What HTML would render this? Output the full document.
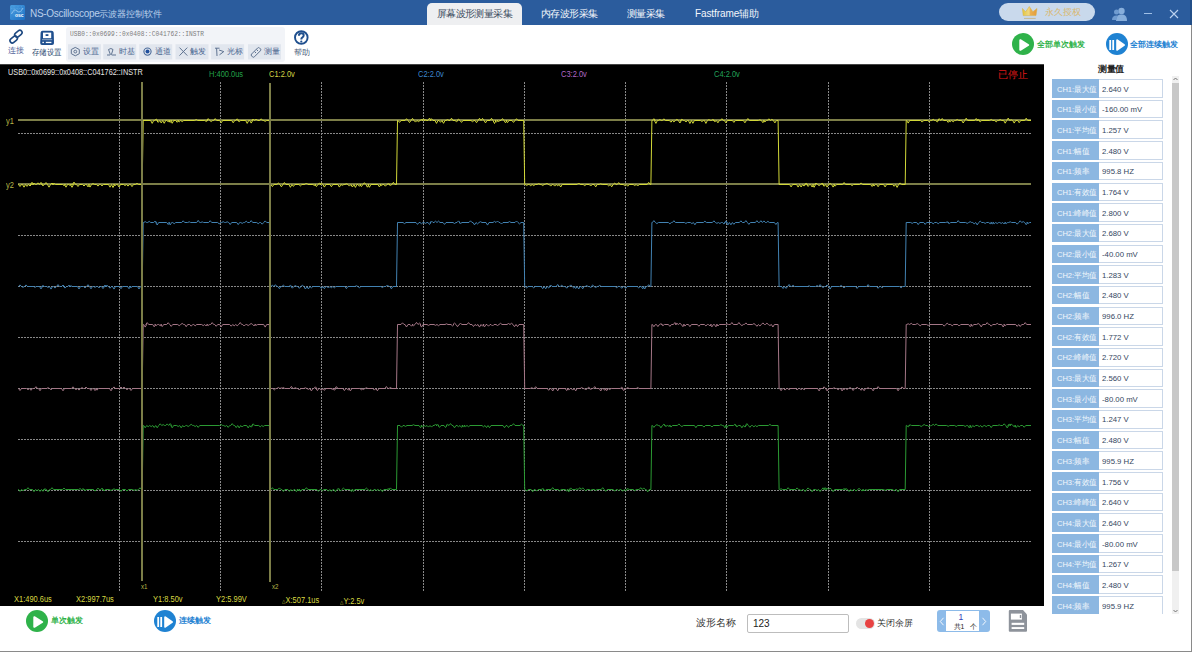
<!DOCTYPE html>
<html><head><meta charset="utf-8">
<style>
*{margin:0;padding:0;box-sizing:border-box}
html,body{width:1192px;height:652px;overflow:hidden;background:#fff;font-family:"Liberation Sans",sans-serif;position:relative}
.a{position:absolute;white-space:nowrap}
#title{left:0;top:0;width:1192px;height:25px;background:#2b5c9d}
.tab{top:8.5px;font-size:10px;letter-spacing:-0.6px;color:#f4f7fb;line-height:10px}
#tab1{left:427px;top:3px;width:95px;height:22px;background:#eeeff1;border-radius:5px 5px 0 0;color:#3c4c5e;font-size:10px;letter-spacing:-0.6px;line-height:10px;padding-top:5.5px;text-align:center}
.tb{top:47.5px;font-size:7.5px;line-height:8px;color:#4a6590}
.mrow{left:1052px;width:111px;height:18.6px}
.ml{position:absolute;left:0;top:0;width:47px;height:100%;background:#8cb7e1;color:#f4f8fc;white-space:nowrap;overflow:hidden}.ml span{position:absolute;left:4.5px;top:6.5px;font-size:8px;line-height:8px;transform-origin:0 0;transform:scaleX(0.94)}
.mv{position:absolute;left:47px;top:0;width:64px;height:100%;background:#fff;border:1px solid #cad7e8;border-left:none;color:#34465e;white-space:nowrap}.mv span{position:absolute;left:3px;top:5.5px;font-size:8px;line-height:8px;transform-origin:0 0;transform:scaleX(0.97)}
.sl{font-size:8.5px;line-height:9px;transform-origin:0 0;transform:scaleX(0.88)}
</style></head><body>
<div class="a" id="title"></div>
<!-- icon -->
<svg class="a" style="left:10px;top:5px" width="15" height="15" viewBox="0 0 15 15"><defs><linearGradient id="ig" x1="0" y1="0" x2="1" y2="1"><stop offset="0" stop-color="#4a9ee0"/><stop offset="1" stop-color="#1c6fc4"/></linearGradient></defs><rect x="0" y="0" width="15" height="15" rx="1.5" fill="url(#ig)"/><path d="M1 3.5H14M1 7H14M4 1V12M8 1V12M11.5 1V12" stroke="#8cc4f0" stroke-width="0.4" stroke-dasharray="0.8 0.8" opacity="0.7"/><path d="M1.5 9 Q4 3 7 6 T13 3" stroke="#bfe0fa" stroke-width="0.6" fill="none"/></svg>
<div class="a" style="left:15px;top:12.5px;font-size:5px;color:#fff;font-weight:bold;line-height:5px">osc</div>
<div class="a" style="left:30px;top:9px;font-size:10px;line-height:10px;color:#b9cfea"><span style="letter-spacing:-0.3px">NS-Oscilloscope</span><span style="font-size:8.8px">示波器控制软件</span></div>
<div class="a" id="tab1">屏幕波形测量采集</div>
<div class="a tab" style="left:541px">内存波形采集</div>
<div class="a tab" style="left:627px">测量采集</div>
<div class="a tab" style="left:695px"><span style="letter-spacing:-0.1px">Fastframe</span>辅助</div>
<!-- license pill -->
<div class="a" style="left:999px;top:3px;width:96px;height:18px;background:#c9d9ec;border-radius:9px"></div>
<div class="a" style="left:1045px;top:8px;font-size:8.8px;line-height:9px;color:#d9b870">永久授权</div>
<svg class="a" style="left:1020px;top:5px" width="20" height="16" viewBox="1020 5 20 16"><defs><linearGradient id="cg" x1="0" y1="0" x2="1" y2="0"><stop offset="0" stop-color="#e2c640"/><stop offset="0.45" stop-color="#efd880"/><stop offset="0.55" stop-color="#eab050"/><stop offset="1" stop-color="#e49a3a"/></linearGradient></defs><path d="M1022.4 8.4 L1025.6 11.8 L1029.3 6.5 L1032.9 11.8 L1037 8.4 L1036 15.6 L1023.2 15.6 Z" fill="url(#cg)" stroke="#d8b040" stroke-width="0.5" stroke-linejoin="round"/><rect x="1024" y="17.9" width="11.7" height="1" fill="#c4b894"/></svg>
<svg class="a" style="left:1112px;top:7px" width="15" height="14" viewBox="0 0 15 14"><circle cx="9.5" cy="4" r="3.2" fill="#87aedb"/><path d="M4 14 C4 9 6 7.5 9.5 7.5 C13 7.5 15 9 15 14Z" fill="#87aedb"/><circle cx="4.5" cy="5" r="2.5" fill="#6f9bd0"/><path d="M0 13 C0 10 1.5 8.5 4.5 8.5 C5 8.5 5.5 8.6 6 8.8 C5 10 4.5 11.5 4.5 13Z" fill="#6f9bd0"/></svg>
<div class="a" style="left:1144px;top:13px;width:8px;height:1px;background:#9fbfe6"></div>
<svg class="a" style="left:1169px;top:9px" width="10" height="10" viewBox="0 0 10 10"><path d="M1 1 L9 9 M9 1 L1 9" stroke="#bcd2f0" stroke-width="1.1"/></svg>
<!-- toolbar -->
<svg class="a" style="left:0;top:25px" width="320" height="39" viewBox="0 25 320 39">
<g fill="none" stroke="#1f4a82" stroke-width="1.6">
<rect x="14.3" y="31.4" width="8.2" height="4.6" rx="2.3" transform="rotate(-40 18.4 33.7)"/>
<rect x="9.6" y="37.2" width="8.2" height="4.6" rx="2.3" transform="rotate(-40 13.7 39.5)"/>
</g>
<path d="M42.5 30.7 H51.5 Q53.5 30.7 53.7 32.7 L54 43 Q54 45 52 45 H42 Q40.2 45 40.2 43 L40.6 32.7 Q40.8 30.7 42.5 30.7Z" fill="#1f4f8e"/>
<rect x="43" y="32.6" width="8.2" height="5.6" fill="#fff"/>
<rect x="45.6" y="34.2" width="2.8" height="1.8" fill="#1f4f8e"/>
<rect x="42" y="39.2" width="10.2" height="1" fill="#fff" opacity="0.5"/>
<rect x="45.8" y="41.8" width="5.6" height="1.3" fill="#fff"/>
<rect x="42.4" y="41.8" width="1.5" height="1.3" fill="#fff"/>
<rect x="66" y="27" width="219" height="35" rx="3" fill="#f2f4f8"/>
<g fill="#e1e6ee">
<rect x="68" y="44.2" width="33" height="15.2"/>
<rect x="103.2" y="44.2" width="33" height="15.2"/>
<rect x="139.2" y="44.2" width="33" height="15.2"/>
<rect x="175.5" y="44.2" width="33" height="15.2"/>
<rect x="211.1" y="44.2" width="33" height="15.2"/>
<rect x="248" y="44.2" width="33" height="15.2"/>
</g>
<g fill="none" stroke="#5f7391" stroke-width="1">
<path d="M75.3 47.4 L79.3 49.5 V53.7 L75.3 55.8 L71.3 53.7 V49.5 Z"/>
<circle cx="75.3" cy="51.6" r="1.4"/>
<path d="M107 55 H110 Q110.5 55 110.2 54 L108.5 49.5 Q111 47.5 113 49.5 L111.5 54.2 Q111.3 55 112 55 H116"/>
<path d="M179.5 47.6 L187.3 55.6 M187.3 47.6 L179.5 55.6"/>
<path d="M215 48.2 H219.5 M216.6 48.2 L217 56 M219 50 L223.8 51.6 L219.5 54.8"/>
<path d="M251.6 54 L257.6 48 Q258.6 47 259.6 48 L260.4 48.8 Q261.4 49.8 260.4 50.8 L254.4 56.8 Q253.4 57.8 252.4 56.8 L251.6 56 Q250.6 55 251.6 54Z M254.5 51.5 L256 53 M256.5 49.5 L258 51"/>
</g>
<circle cx="147.5" cy="51.6" r="3.6" fill="none" stroke="#4a6a9a" stroke-width="1.1"/>
<circle cx="147.5" cy="51.6" r="2" fill="#1f4f9e"/>
<circle cx="301.3" cy="37.5" r="6.3" fill="none" stroke="#1f4f8e" stroke-width="1.9"/>
<path d="M298.9 35.8 Q298.9 33.2 301.3 33.2 Q303.7 33.2 303.7 35.3 Q303.7 36.8 302.2 37.6 Q301.3 38.1 301.3 39.5" fill="none" stroke="#1f4f8e" stroke-width="2"/>
<circle cx="301.3" cy="41.5" r="1.1" fill="#1f4f8e"/>
</svg>
<div class="a" style="left:8px;top:47px;font-size:7.6px;line-height:8px;color:#4f5f98">连接</div>
<div class="a" style="left:32px;top:48.5px;font-size:8px;line-height:8px;color:#2a4a70;transform-origin:0 0;transform:scaleX(0.93)">存储设置</div>
<div class="a" style="left:70px;top:30px;font-family:'Liberation Mono',monospace;font-size:7.8px;line-height:8px;color:#7e7e7e;transform-origin:0 0;transform:scaleX(0.795)">USB0::0x0699::0x0408::C041762::INSTR</div>
<div class="a tb" style="left:83.4px">设置</div>
<div class="a tb" style="left:118.9px">时基</div>
<div class="a tb" style="left:155.3px">通道</div>
<div class="a tb" style="left:189.8px">触发</div>
<div class="a tb" style="left:226.5px">光标</div>
<div class="a tb" style="left:263.6px">测量</div>
<div class="a" style="left:294px;top:48.5px;font-size:7.5px;line-height:8px;color:#4a5a78">帮助</div>
<!-- all trigger -->
<div class="a" style="left:1011.5px;top:33px;width:22px;height:22px;border-radius:50%;background:#2fb24a"></div>
<svg class="a" style="left:1018px;top:38px" width="12" height="14" viewBox="0 0 12 14"><path d="M2.3 2.2 L10.2 7 L2.3 11.8 Z" fill="#fff" stroke="#fff" stroke-width="2" stroke-linejoin="round"/></svg>
<div class="a" style="left:1037px;top:41px;font-size:8px;line-height:8px;color:#2fb24a;font-weight:bold">全部单次触发</div>
<div class="a" style="left:1105.5px;top:33px;width:22px;height:22px;border-radius:50%;background:#1f82d2"></div>
<svg class="a" style="left:1108px;top:38px" width="18" height="14" viewBox="0 0 18 14"><rect x="1.3" y="2" width="1.8" height="10" fill="#fff"/><rect x="4.3" y="2" width="1.8" height="10" fill="#fff"/><path d="M9.2 2.2 L16 7 L9.2 11.8 Z" fill="#fff" stroke="#fff" stroke-width="2" stroke-linejoin="round"/></svg>
<div class="a" style="left:1130px;top:41px;font-size:8px;line-height:8px;color:#1f82d2;font-weight:bold">全部连续触发</div>
<!-- scope -->
<div class="a" style="left:0;top:64px;width:1044px;height:542px;background:#000;border-top:1px solid #444"></div>
<svg class="a" width="1044" height="541" viewBox="0 65 1044 541" style="left:0;top:65px">
<path d="M119.5,82V592M220.5,82V592M321.5,82V592M423.5,82V592M524.5,82V592M625.5,82V592M726.5,82V592M828.5,82V592M929.5,82V592M18,133.5H1031M18,184.5H1031M18,235.5H1031M18,286.5H1031M18,337.5H1031M18,388.5H1031M18,439.5H1031M18,490.5H1031M18,541.5H1031" stroke="#888888" stroke-width="1" stroke-dasharray="2 1" fill="none"/>
<path d="M18,120H1031M18,184H1031" stroke="#7c7e48" stroke-width="2"/>
<path d="M18,184.5 L18.5,184.5 L20.0,186.5 L21.5,184.5 L22.5,184.5 L24.0,187.2 L25.5,184.5 L25.5,184.5 L27.0,186.4 L28.5,184.5 L28.5,184.5 L30.0,186.0 L31.5,184.5 L30.5,184.5 L32.0,182.3 L33.5,184.5 L32.5,184.5 L34.0,183.2 L35.5,184.5 L36.5,184.5 L38.0,182.8 L39.5,184.5 L39.5,184.5 L41.0,182.4 L42.5,184.5 L41.5,184.5 L43.0,185.7 L44.5,184.5 L44.5,184.5 L46.0,182.5 L47.5,184.5 L47.5,184.5 L49.0,187.2 L50.5,184.5 L50.5,184.5 L52.0,183.0 L53.5,184.5 L52.5,184.5 L54.0,183.4 L55.5,184.5 L62.5,184.5 L64.0,185.5 L65.5,184.5 L64.5,184.5 L66.0,187.2 L67.5,184.5 L68.5,184.5 L70.0,185.3 L71.5,184.5 L70.5,184.5 L72.0,187.3 L73.5,184.5 L72.5,184.5 L74.0,182.1 L75.5,184.5 L76.5,184.5 L78.0,186.5 L79.5,184.5 L82.5,184.5 L84.0,186.0 L85.5,184.5 L86.5,184.5 L88.0,186.9 L89.5,184.5 L88.5,184.5 L90.0,187.1 L91.5,184.5 L91.5,184.5 L93.0,183.6 L94.5,184.5 L96.5,184.5 L98.0,186.1 L99.5,184.5 L100.5,184.5 L102.0,185.8 L103.5,184.5 L108.5,184.5 L110.0,187.2 L111.5,184.5 L111.5,184.5 L113.0,187.5 L114.5,184.5 L113.5,184.5 L115.0,185.6 L116.5,184.5 L117.5,184.5 L119.0,187.0 L120.5,184.5 L123.5,184.5 L125.0,185.5 L126.5,184.5 L126.5,184.5 L128.0,186.1 L129.5,184.5 L130.5,184.5 L132.0,186.6 L133.5,184.5 L135.5,184.5 L137.0,183.3 L138.5,184.5 L142.2,184.5 L143.2,120.5 L150.7,120.5 L152.2,123.4 L153.7,120.5 L154.7,120.5 L156.2,119.1 L157.7,120.5 L156.7,120.5 L158.2,122.4 L159.7,120.5 L159.7,120.5 L161.2,122.9 L162.7,120.5 L162.7,120.5 L164.2,123.3 L165.7,120.5 L166.7,120.5 L168.2,121.7 L169.7,120.5 L168.7,120.5 L170.2,122.4 L171.7,120.5 L170.7,120.5 L172.2,123.3 L173.7,120.5 L175.7,120.5 L177.2,122.3 L178.7,120.5 L177.7,120.5 L179.2,121.9 L180.7,120.5 L180.7,120.5 L182.2,121.6 L183.7,120.5 L194.7,120.5 L196.2,119.6 L197.7,120.5 L204.7,120.5 L206.2,121.4 L207.7,120.5 L206.7,120.5 L208.2,118.6 L209.7,120.5 L209.7,120.5 L211.2,121.5 L212.7,120.5 L213.7,120.5 L215.2,118.6 L216.7,120.5 L219.7,120.5 L221.2,122.8 L222.7,120.5 L231.7,120.5 L233.2,122.8 L234.7,120.5 L235.7,120.5 L237.2,118.8 L238.7,120.5 L237.7,120.5 L239.2,121.6 L240.7,120.5 L245.7,120.5 L247.2,123.4 L248.7,120.5 L249.7,120.5 L251.2,123.1 L252.7,120.5 L251.7,120.5 L253.2,119.0 L254.7,120.5 L254.7,120.5 L256.2,119.0 L257.7,120.5 L259.7,120.5 L261.2,118.8 L262.7,120.5 L263.7,120.5 L265.2,121.3 L266.7,120.5 L269.4,120.5 L270.4,184.5 L270.9,184.5 L272.4,186.6 L273.9,184.5 L276.9,184.5 L278.4,183.1 L279.9,184.5 L279.9,184.5 L281.4,186.8 L282.9,184.5 L282.9,184.5 L284.4,182.5 L285.9,184.5 L288.9,184.5 L290.4,187.3 L291.9,184.5 L291.9,184.5 L293.4,186.4 L294.9,184.5 L298.9,184.5 L300.4,185.9 L301.9,184.5 L304.9,184.5 L306.4,183.0 L307.9,184.5 L312.9,184.5 L314.4,185.5 L315.9,184.5 L314.9,184.5 L316.4,186.6 L317.9,184.5 L317.9,184.5 L319.4,183.3 L320.9,184.5 L319.9,184.5 L321.4,183.2 L322.9,184.5 L322.9,184.5 L324.4,187.1 L325.9,184.5 L329.9,184.5 L331.4,186.7 L332.9,184.5 L337.9,184.5 L339.4,187.1 L340.9,184.5 L340.9,184.5 L342.4,185.3 L343.9,184.5 L344.9,184.5 L346.4,183.8 L347.9,184.5 L347.9,184.5 L349.4,186.1 L350.9,184.5 L350.9,184.5 L352.4,187.0 L353.9,184.5 L353.9,184.5 L355.4,187.4 L356.9,184.5 L357.9,184.5 L359.4,186.3 L360.9,184.5 L359.9,184.5 L361.4,186.6 L362.9,184.5 L362.9,184.5 L364.4,182.7 L365.9,184.5 L365.9,184.5 L367.4,187.2 L368.9,184.5 L367.9,184.5 L369.4,187.3 L370.9,184.5 L377.9,184.5 L379.4,186.9 L380.9,184.5 L379.9,184.5 L381.4,185.5 L382.9,184.5 L383.9,184.5 L385.4,186.2 L386.9,184.5 L386.9,184.5 L388.4,183.8 L389.9,184.5 L388.9,184.5 L390.4,185.4 L391.9,184.5 L391.9,184.5 L393.4,182.3 L394.9,184.5 L396.5,184.5 L397.5,120.5 L398.0,120.5 L399.5,122.4 L401.0,120.5 L405.0,120.5 L406.5,118.7 L408.0,120.5 L408.0,120.5 L409.5,122.5 L411.0,120.5 L411.0,120.5 L412.5,118.4 L414.0,120.5 L414.0,120.5 L415.5,122.1 L417.0,120.5 L417.0,120.5 L418.5,121.6 L420.0,120.5 L420.0,120.5 L421.5,119.5 L423.0,120.5 L422.0,120.5 L423.5,118.8 L425.0,120.5 L424.0,120.5 L425.5,119.8 L427.0,120.5 L428.0,120.5 L429.5,118.1 L431.0,120.5 L430.0,120.5 L431.5,118.7 L433.0,120.5 L435.0,120.5 L436.5,123.4 L438.0,120.5 L439.0,120.5 L440.5,122.3 L442.0,120.5 L442.0,120.5 L443.5,123.3 L445.0,120.5 L446.0,120.5 L447.5,119.7 L449.0,120.5 L450.0,120.5 L451.5,118.2 L453.0,120.5 L455.0,120.5 L456.5,121.6 L458.0,120.5 L457.0,120.5 L458.5,119.3 L460.0,120.5 L460.0,120.5 L461.5,122.4 L463.0,120.5 L471.0,120.5 L472.5,121.7 L474.0,120.5 L475.0,120.5 L476.5,122.7 L478.0,120.5 L478.0,120.5 L479.5,118.3 L481.0,120.5 L481.0,120.5 L482.5,118.4 L484.0,120.5 L484.0,120.5 L485.5,122.9 L487.0,120.5 L490.0,120.5 L491.5,118.3 L493.0,120.5 L493.0,120.5 L494.5,123.5 L496.0,120.5 L495.0,120.5 L496.5,121.8 L498.0,120.5 L497.0,120.5 L498.5,121.5 L500.0,120.5 L501.0,120.5 L502.5,118.6 L504.0,120.5 L504.0,120.5 L505.5,122.8 L507.0,120.5 L506.0,120.5 L507.5,122.6 L509.0,120.5 L512.0,120.5 L513.5,122.4 L515.0,120.5 L515.0,120.5 L516.5,118.7 L518.0,120.5 L523.7,120.5 L524.7,184.5 L525.2,184.5 L526.7,185.4 L528.2,184.5 L529.2,184.5 L530.7,185.7 L532.2,184.5 L532.2,184.5 L533.7,185.6 L535.2,184.5 L537.2,184.5 L538.7,183.7 L540.2,184.5 L541.2,184.5 L542.7,185.5 L544.2,184.5 L545.2,184.5 L546.7,183.0 L548.2,184.5 L549.2,184.5 L550.7,186.1 L552.2,184.5 L553.2,184.5 L554.7,186.1 L556.2,184.5 L556.2,184.5 L557.7,185.7 L559.2,184.5 L559.2,184.5 L560.7,187.0 L562.2,184.5 L577.2,184.5 L578.7,183.0 L580.2,184.5 L583.2,184.5 L584.7,185.6 L586.2,184.5 L589.2,184.5 L590.7,186.0 L592.2,184.5 L594.2,184.5 L595.7,186.9 L597.2,184.5 L599.2,184.5 L600.7,183.9 L602.2,184.5 L607.2,184.5 L608.7,185.9 L610.2,184.5 L610.2,184.5 L611.7,186.8 L613.2,184.5 L613.2,184.5 L614.7,183.2 L616.2,184.5 L617.2,184.5 L618.7,182.6 L620.2,184.5 L623.2,184.5 L624.7,185.5 L626.2,184.5 L626.2,184.5 L627.7,186.2 L629.2,184.5 L633.2,184.5 L634.7,185.5 L636.2,184.5 L636.2,184.5 L637.7,186.0 L639.2,184.5 L647.2,184.5 L648.7,182.4 L650.2,184.5 L650.9,184.5 L651.9,120.5 L652.4,120.5 L653.9,118.7 L655.4,120.5 L654.4,120.5 L655.9,123.4 L657.4,120.5 L658.4,120.5 L659.9,119.6 L661.4,120.5 L662.4,120.5 L663.9,118.8 L665.4,120.5 L669.4,120.5 L670.9,122.2 L672.4,120.5 L672.4,120.5 L673.9,121.9 L675.4,120.5 L675.4,120.5 L676.9,119.4 L678.4,120.5 L678.4,120.5 L679.9,123.0 L681.4,120.5 L680.4,120.5 L681.9,119.2 L683.4,120.5 L684.4,120.5 L685.9,122.0 L687.4,120.5 L688.4,120.5 L689.9,123.5 L691.4,120.5 L691.4,120.5 L692.9,123.3 L694.4,120.5 L700.4,120.5 L701.9,121.5 L703.4,120.5 L704.4,120.5 L705.9,123.4 L707.4,120.5 L707.4,120.5 L708.9,119.7 L710.4,120.5 L711.4,120.5 L712.9,119.5 L714.4,120.5 L713.4,120.5 L714.9,121.6 L716.4,120.5 L716.4,120.5 L717.9,122.8 L719.4,120.5 L720.4,120.5 L721.9,118.7 L723.4,120.5 L724.4,120.5 L725.9,122.9 L727.4,120.5 L732.4,120.5 L733.9,122.4 L735.4,120.5 L743.4,120.5 L744.9,122.8 L746.4,120.5 L746.4,120.5 L747.9,118.5 L749.4,120.5 L758.4,120.5 L759.9,119.9 L761.4,120.5 L761.4,120.5 L762.9,122.7 L764.4,120.5 L763.4,120.5 L764.9,121.9 L766.4,120.5 L767.4,120.5 L768.9,118.8 L770.4,120.5 L770.4,120.5 L771.9,119.3 L773.4,120.5 L773.4,120.5 L774.9,122.9 L776.4,120.5 L778.1,120.5 L779.1,184.5 L789.6,184.5 L791.1,186.9 L792.6,184.5 L796.6,184.5 L798.1,187.1 L799.6,184.5 L799.6,184.5 L801.1,187.0 L802.6,184.5 L802.6,184.5 L804.1,186.1 L805.6,184.5 L804.6,184.5 L806.1,183.3 L807.6,184.5 L806.6,184.5 L808.1,186.5 L809.6,184.5 L810.6,184.5 L812.1,187.0 L813.6,184.5 L812.6,184.5 L814.1,187.3 L815.6,184.5 L814.6,184.5 L816.1,183.0 L817.6,184.5 L817.6,184.5 L819.1,185.6 L820.6,184.5 L820.6,184.5 L822.1,183.3 L823.6,184.5 L822.6,184.5 L824.1,186.3 L825.6,184.5 L825.6,184.5 L827.1,187.1 L828.6,184.5 L828.6,184.5 L830.1,183.5 L831.6,184.5 L831.6,184.5 L833.1,187.1 L834.6,184.5 L833.6,184.5 L835.1,186.2 L836.6,184.5 L842.6,184.5 L844.1,182.5 L845.6,184.5 L850.6,184.5 L852.1,185.5 L853.6,184.5 L859.6,184.5 L861.1,182.9 L862.6,184.5 L870.6,184.5 L872.1,186.5 L873.6,184.5 L872.6,184.5 L874.1,185.9 L875.6,184.5 L876.6,184.5 L878.1,186.7 L879.6,184.5 L883.6,184.5 L885.1,186.9 L886.6,184.5 L892.6,184.5 L894.1,186.3 L895.6,184.5 L895.6,184.5 L897.1,187.4 L898.6,184.5 L898.6,184.5 L900.1,182.9 L901.6,184.5 L905.2,184.5 L906.2,120.5 L906.7,120.5 L908.2,123.1 L909.7,120.5 L920.7,120.5 L922.2,122.1 L923.7,120.5 L927.7,120.5 L929.2,121.7 L930.7,120.5 L931.7,120.5 L933.2,119.3 L934.7,120.5 L935.7,120.5 L937.2,121.9 L938.7,120.5 L937.7,120.5 L939.2,118.6 L940.7,120.5 L940.7,120.5 L942.2,118.5 L943.7,120.5 L946.7,120.5 L948.2,122.4 L949.7,120.5 L948.7,120.5 L950.2,121.7 L951.7,120.5 L951.7,120.5 L953.2,121.8 L954.7,120.5 L955.7,120.5 L957.2,119.5 L958.7,120.5 L961.7,120.5 L963.2,123.0 L964.7,120.5 L964.7,120.5 L966.2,118.2 L967.7,120.5 L974.7,120.5 L976.2,118.5 L977.7,120.5 L976.7,120.5 L978.2,119.5 L979.7,120.5 L978.7,120.5 L980.2,121.6 L981.7,120.5 L989.7,120.5 L991.2,119.5 L992.7,120.5 L994.7,120.5 L996.2,121.8 L997.7,120.5 L998.7,120.5 L1000.2,119.6 L1001.7,120.5 L1003.7,120.5 L1005.2,123.2 L1006.7,120.5 L1006.7,120.5 L1008.2,118.1 L1009.7,120.5 L1009.7,120.5 L1011.2,119.8 L1012.7,120.5 L1012.7,120.5 L1014.2,123.1 L1015.7,120.5 L1017.7,120.5 L1019.2,122.7 L1020.7,120.5 L1024.7,120.5 L1026.2,118.2 L1027.7,120.5 L1031,120.5" fill="none" stroke="#d2d838" stroke-width="1"/>
<path d="M18,286.5 L18.5,286.5 L20.0,284.9 L21.5,286.5 L21.5,286.5 L23.0,287.3 L24.5,286.5 L24.5,286.5 L26.0,284.9 L27.5,286.5 L33.5,286.5 L35.0,287.3 L36.5,286.5 L39.5,286.5 L41.0,288.9 L42.5,286.5 L41.5,286.5 L43.0,285.6 L44.5,286.5 L46.5,286.5 L48.0,287.4 L49.5,286.5 L49.5,286.5 L51.0,289.1 L52.5,286.5 L53.5,286.5 L55.0,288.1 L56.5,286.5 L56.5,286.5 L58.0,284.6 L59.5,286.5 L61.5,286.5 L63.0,285.1 L64.5,286.5 L63.5,286.5 L65.0,288.1 L66.5,286.5 L67.5,286.5 L69.0,285.3 L70.5,286.5 L69.5,286.5 L71.0,285.8 L72.5,286.5 L77.5,286.5 L79.0,289.0 L80.5,286.5 L83.5,286.5 L85.0,287.9 L86.5,286.5 L86.5,286.5 L88.0,284.7 L89.5,286.5 L89.5,286.5 L91.0,288.8 L92.5,286.5 L93.5,286.5 L95.0,287.3 L96.5,286.5 L97.5,286.5 L99.0,287.7 L100.5,286.5 L101.5,286.5 L103.0,288.6 L104.5,286.5 L103.5,286.5 L105.0,285.2 L106.5,286.5 L105.5,286.5 L107.0,285.4 L108.5,286.5 L108.5,286.5 L110.0,288.2 L111.5,286.5 L112.5,286.5 L114.0,289.1 L115.5,286.5 L119.5,286.5 L121.0,288.7 L122.5,286.5 L127.5,286.5 L129.0,288.7 L130.5,286.5 L129.5,286.5 L131.0,287.5 L132.5,286.5 L137.5,286.5 L139.0,289.0 L140.5,286.5 L142.2,286.5 L143.2,222.5 L143.7,222.5 L145.2,221.6 L146.7,222.5 L147.7,222.5 L149.2,221.4 L150.7,222.5 L153.7,222.5 L155.2,221.0 L156.7,222.5 L155.7,222.5 L157.2,225.0 L158.7,222.5 L166.7,222.5 L168.2,224.5 L169.7,222.5 L168.7,222.5 L170.2,224.9 L171.7,222.5 L172.7,222.5 L174.2,223.7 L175.7,222.5 L181.7,222.5 L183.2,220.8 L184.7,222.5 L187.7,222.5 L189.2,221.8 L190.7,222.5 L196.7,222.5 L198.2,220.4 L199.7,222.5 L200.7,222.5 L202.2,221.9 L203.7,222.5 L208.7,222.5 L210.2,220.7 L211.7,222.5 L217.7,222.5 L219.2,223.9 L220.7,222.5 L221.7,222.5 L223.2,221.7 L224.7,222.5 L225.7,222.5 L227.2,221.8 L228.7,222.5 L228.7,222.5 L230.2,224.5 L231.7,222.5 L236.7,222.5 L238.2,224.6 L239.7,222.5 L240.7,222.5 L242.2,223.4 L243.7,222.5 L244.7,222.5 L246.2,221.2 L247.7,222.5 L249.7,222.5 L251.2,220.6 L252.7,222.5 L256.7,222.5 L258.2,223.7 L259.7,222.5 L260.7,222.5 L262.2,224.2 L263.7,222.5 L263.7,222.5 L265.2,220.9 L266.7,222.5 L269.4,222.5 L270.4,286.5 L270.9,286.5 L272.4,285.3 L273.9,286.5 L273.9,286.5 L275.4,284.7 L276.9,286.5 L277.9,286.5 L279.4,288.6 L280.9,286.5 L281.9,286.5 L283.4,285.2 L284.9,286.5 L288.9,286.5 L290.4,285.4 L291.9,286.5 L290.9,286.5 L292.4,288.2 L293.9,286.5 L293.9,286.5 L295.4,285.6 L296.9,286.5 L297.9,286.5 L299.4,288.3 L300.9,286.5 L300.9,286.5 L302.4,285.3 L303.9,286.5 L303.9,286.5 L305.4,289.0 L306.9,286.5 L306.9,286.5 L308.4,288.9 L309.9,286.5 L309.9,286.5 L311.4,287.8 L312.9,286.5 L319.9,286.5 L321.4,288.4 L322.9,286.5 L322.9,286.5 L324.4,288.7 L325.9,286.5 L326.9,286.5 L328.4,288.0 L329.9,286.5 L329.9,286.5 L331.4,287.7 L332.9,286.5 L332.9,286.5 L334.4,287.8 L335.9,286.5 L344.9,286.5 L346.4,288.6 L347.9,286.5 L354.9,286.5 L356.4,285.8 L357.9,286.5 L357.9,286.5 L359.4,287.7 L360.9,286.5 L380.9,286.5 L382.4,287.5 L383.9,286.5 L385.9,286.5 L387.4,285.0 L388.9,286.5 L389.9,286.5 L391.4,288.8 L392.9,286.5 L396.5,286.5 L397.5,222.5 L403.0,222.5 L404.5,223.6 L406.0,222.5 L416.0,222.5 L417.5,224.4 L419.0,222.5 L420.0,222.5 L421.5,223.7 L423.0,222.5 L424.0,222.5 L425.5,223.4 L427.0,222.5 L428.0,222.5 L429.5,224.5 L431.0,222.5 L430.0,222.5 L431.5,221.0 L433.0,222.5 L434.0,222.5 L435.5,221.2 L437.0,222.5 L437.0,222.5 L438.5,221.1 L440.0,222.5 L443.0,222.5 L444.5,224.4 L446.0,222.5 L453.0,222.5 L454.5,223.5 L456.0,222.5 L457.0,222.5 L458.5,220.9 L460.0,222.5 L459.0,222.5 L460.5,223.5 L462.0,222.5 L469.0,222.5 L470.5,220.8 L472.0,222.5 L473.0,222.5 L474.5,224.9 L476.0,222.5 L476.0,222.5 L477.5,223.9 L479.0,222.5 L479.0,222.5 L480.5,221.7 L482.0,222.5 L486.0,222.5 L487.5,225.1 L489.0,222.5 L493.0,222.5 L494.5,221.4 L496.0,222.5 L496.0,222.5 L497.5,221.0 L499.0,222.5 L500.0,222.5 L501.5,224.0 L503.0,222.5 L508.0,222.5 L509.5,221.6 L511.0,222.5 L515.0,222.5 L516.5,221.0 L518.0,222.5 L518.0,222.5 L519.5,223.9 L521.0,222.5 L523.7,222.5 L524.7,286.5 L525.2,286.5 L526.7,287.9 L528.2,286.5 L532.2,286.5 L533.7,287.8 L535.2,286.5 L541.2,286.5 L542.7,288.7 L544.2,286.5 L544.2,286.5 L545.7,288.8 L547.2,286.5 L547.2,286.5 L548.7,287.8 L550.2,286.5 L549.2,286.5 L550.7,285.0 L552.2,286.5 L556.2,286.5 L557.7,284.5 L559.2,286.5 L560.2,286.5 L561.7,285.3 L563.2,286.5 L565.2,286.5 L566.7,288.2 L568.2,286.5 L569.2,286.5 L570.7,284.9 L572.2,286.5 L572.2,286.5 L573.7,287.9 L575.2,286.5 L574.2,286.5 L575.7,288.5 L577.2,286.5 L577.2,286.5 L578.7,289.0 L580.2,286.5 L581.2,286.5 L582.7,288.8 L584.2,286.5 L585.2,286.5 L586.7,285.6 L588.2,286.5 L589.2,286.5 L590.7,287.4 L592.2,286.5 L591.2,286.5 L592.7,285.1 L594.2,286.5 L594.2,286.5 L595.7,287.5 L597.2,286.5 L598.2,286.5 L599.7,285.4 L601.2,286.5 L615.2,286.5 L616.7,287.7 L618.2,286.5 L620.2,286.5 L621.7,288.3 L623.2,286.5 L624.2,286.5 L625.7,288.4 L627.2,286.5 L637.2,286.5 L638.7,287.8 L640.2,286.5 L641.2,286.5 L642.7,288.8 L644.2,286.5 L643.2,286.5 L644.7,289.0 L646.2,286.5 L647.2,286.5 L648.7,284.7 L650.2,286.5 L650.9,286.5 L651.9,222.5 L652.4,222.5 L653.9,220.6 L655.4,222.5 L655.4,222.5 L656.9,223.6 L658.4,222.5 L668.4,222.5 L669.9,223.8 L671.4,222.5 L672.4,222.5 L673.9,220.7 L675.4,222.5 L684.4,222.5 L685.9,223.4 L687.4,222.5 L690.4,222.5 L691.9,223.6 L693.4,222.5 L693.4,222.5 L694.9,224.8 L696.4,222.5 L703.4,222.5 L704.9,221.2 L706.4,222.5 L712.4,222.5 L713.9,220.8 L715.4,222.5 L715.4,222.5 L716.9,223.3 L718.4,222.5 L718.4,222.5 L719.9,223.5 L721.4,222.5 L722.4,222.5 L723.9,223.9 L725.4,222.5 L724.4,222.5 L725.9,221.1 L727.4,222.5 L726.4,222.5 L727.9,224.9 L729.4,222.5 L729.4,222.5 L730.9,224.8 L732.4,222.5 L732.4,222.5 L733.9,224.3 L735.4,222.5 L739.4,222.5 L740.9,220.8 L742.4,222.5 L744.4,222.5 L745.9,220.6 L747.4,222.5 L747.4,222.5 L748.9,224.4 L750.4,222.5 L755.4,222.5 L756.9,220.7 L758.4,222.5 L759.4,222.5 L760.9,220.7 L762.4,222.5 L762.4,222.5 L763.9,220.9 L765.4,222.5 L766.4,222.5 L767.9,221.3 L769.4,222.5 L774.4,222.5 L775.9,224.5 L777.4,222.5 L778.1,222.5 L779.1,286.5 L781.6,286.5 L783.1,288.5 L784.6,286.5 L784.6,286.5 L786.1,288.4 L787.6,286.5 L787.6,286.5 L789.1,284.5 L790.6,286.5 L791.6,286.5 L793.1,285.3 L794.6,286.5 L807.6,286.5 L809.1,285.8 L810.6,286.5 L815.6,286.5 L817.1,285.6 L818.6,286.5 L818.6,286.5 L820.1,284.6 L821.6,286.5 L821.6,286.5 L823.1,287.5 L824.6,286.5 L825.6,286.5 L827.1,284.9 L828.6,286.5 L828.6,286.5 L830.1,289.1 L831.6,286.5 L839.6,286.5 L841.1,285.5 L842.6,286.5 L842.6,286.5 L844.1,288.0 L845.6,286.5 L855.6,286.5 L857.1,288.4 L858.6,286.5 L866.6,286.5 L868.1,284.6 L869.6,286.5 L876.6,286.5 L878.1,288.3 L879.6,286.5 L880.6,286.5 L882.1,287.7 L883.6,286.5 L899.6,286.5 L901.1,287.8 L902.6,286.5 L905.2,286.5 L906.2,222.5 L910.7,222.5 L912.2,223.4 L913.7,222.5 L916.7,222.5 L918.2,224.6 L919.7,222.5 L923.7,222.5 L925.2,224.4 L926.7,222.5 L931.7,222.5 L933.2,223.8 L934.7,222.5 L936.7,222.5 L938.2,223.7 L939.7,222.5 L945.7,222.5 L947.2,221.9 L948.7,222.5 L947.7,222.5 L949.2,223.6 L950.7,222.5 L956.7,222.5 L958.2,220.6 L959.7,222.5 L965.7,222.5 L967.2,223.4 L968.7,222.5 L968.7,222.5 L970.2,221.7 L971.7,222.5 L972.7,222.5 L974.2,223.8 L975.7,222.5 L975.7,222.5 L977.2,224.9 L978.7,222.5 L978.7,222.5 L980.2,221.1 L981.7,222.5 L983.7,222.5 L985.2,223.4 L986.7,222.5 L988.7,222.5 L990.2,223.8 L991.7,222.5 L990.7,222.5 L992.2,223.9 L993.7,222.5 L992.7,222.5 L994.2,223.7 L995.7,222.5 L995.7,222.5 L997.2,223.5 L998.7,222.5 L999.7,222.5 L1001.2,223.4 L1002.7,222.5 L1002.7,222.5 L1004.2,224.0 L1005.7,222.5 L1004.7,222.5 L1006.2,223.6 L1007.7,222.5 L1008.7,222.5 L1010.2,221.8 L1011.7,222.5 L1015.7,222.5 L1017.2,224.2 L1018.7,222.5 L1018.7,222.5 L1020.2,220.8 L1021.7,222.5 L1021.7,222.5 L1023.2,221.6 L1024.7,222.5 L1024.7,222.5 L1026.2,224.7 L1027.7,222.5 L1026.7,222.5 L1028.2,223.4 L1029.7,222.5 L1031,222.5" fill="none" stroke="#4282b2" stroke-width="1"/>
<path d="M18,388.5 L18.5,388.5 L20.0,390.5 L21.5,388.5 L26.5,388.5 L28.0,389.7 L29.5,388.5 L29.5,388.5 L31.0,390.3 L32.5,388.5 L34.5,388.5 L36.0,386.7 L37.5,388.5 L38.5,388.5 L40.0,390.7 L41.5,388.5 L46.5,388.5 L48.0,387.7 L49.5,388.5 L49.5,388.5 L51.0,389.7 L52.5,388.5 L61.5,388.5 L63.0,390.8 L64.5,388.5 L71.5,388.5 L73.0,386.8 L74.5,388.5 L74.5,388.5 L76.0,389.6 L77.5,388.5 L77.5,388.5 L79.0,390.1 L80.5,388.5 L80.5,388.5 L82.0,387.7 L83.5,388.5 L84.5,388.5 L86.0,387.1 L87.5,388.5 L89.5,388.5 L91.0,390.5 L92.5,388.5 L93.5,388.5 L95.0,390.6 L96.5,388.5 L95.5,388.5 L97.0,390.2 L98.5,388.5 L109.5,388.5 L111.0,390.8 L112.5,388.5 L112.5,388.5 L114.0,386.9 L115.5,388.5 L119.5,388.5 L121.0,387.0 L122.5,388.5 L122.5,388.5 L124.0,387.1 L125.5,388.5 L125.5,388.5 L127.0,389.6 L128.5,388.5 L129.5,388.5 L131.0,390.5 L132.5,388.5 L142.2,388.5 L143.2,324.5 L143.7,324.5 L145.2,327.1 L146.7,324.5 L145.7,324.5 L147.2,322.6 L148.7,324.5 L152.7,324.5 L154.2,326.8 L155.7,324.5 L154.7,324.5 L156.2,325.6 L157.7,324.5 L158.7,324.5 L160.2,325.7 L161.7,324.5 L160.7,324.5 L162.2,326.6 L163.7,324.5 L166.7,324.5 L168.2,322.7 L169.7,324.5 L169.7,324.5 L171.2,326.4 L172.7,324.5 L177.7,324.5 L179.2,325.7 L180.7,324.5 L180.7,324.5 L182.2,323.4 L183.7,324.5 L184.7,324.5 L186.2,326.7 L187.7,324.5 L189.7,324.5 L191.2,326.2 L192.7,324.5 L193.7,324.5 L195.2,325.8 L196.7,324.5 L201.7,324.5 L203.2,325.6 L204.7,324.5 L204.7,324.5 L206.2,326.0 L207.7,324.5 L206.7,324.5 L208.2,325.5 L209.7,324.5 L210.7,324.5 L212.2,322.6 L213.7,324.5 L214.7,324.5 L216.2,326.3 L217.7,324.5 L219.7,324.5 L221.2,326.9 L222.7,324.5 L229.7,324.5 L231.2,326.2 L232.7,324.5 L232.7,324.5 L234.2,325.8 L235.7,324.5 L235.7,324.5 L237.2,325.7 L238.7,324.5 L238.7,324.5 L240.2,322.5 L241.7,324.5 L242.7,324.5 L244.2,326.0 L245.7,324.5 L246.7,324.5 L248.2,325.5 L249.7,324.5 L249.7,324.5 L251.2,323.5 L252.7,324.5 L252.7,324.5 L254.2,326.0 L255.7,324.5 L254.7,324.5 L256.2,325.3 L257.7,324.5 L263.7,324.5 L265.2,327.1 L266.7,324.5 L269.4,324.5 L270.4,388.5 L272.9,388.5 L274.4,389.9 L275.9,388.5 L276.9,388.5 L278.4,387.5 L279.9,388.5 L279.9,388.5 L281.4,387.9 L282.9,388.5 L281.9,388.5 L283.4,387.5 L284.9,388.5 L289.9,388.5 L291.4,386.4 L292.9,388.5 L293.9,388.5 L295.4,387.7 L296.9,388.5 L297.9,388.5 L299.4,390.0 L300.9,388.5 L303.9,388.5 L305.4,387.8 L306.9,388.5 L306.9,388.5 L308.4,389.3 L309.9,388.5 L309.9,388.5 L311.4,390.9 L312.9,388.5 L313.9,388.5 L315.4,386.8 L316.9,388.5 L315.9,388.5 L317.4,390.6 L318.9,388.5 L319.9,388.5 L321.4,390.3 L322.9,388.5 L322.9,388.5 L324.4,390.4 L325.9,388.5 L330.9,388.5 L332.4,389.3 L333.9,388.5 L332.9,388.5 L334.4,390.3 L335.9,388.5 L334.9,388.5 L336.4,386.6 L337.9,388.5 L342.9,388.5 L344.4,390.6 L345.9,388.5 L346.9,388.5 L348.4,390.2 L349.9,388.5 L348.9,388.5 L350.4,390.9 L351.9,388.5 L359.9,388.5 L361.4,389.8 L362.9,388.5 L361.9,388.5 L363.4,389.5 L364.9,388.5 L364.9,388.5 L366.4,387.8 L367.9,388.5 L372.9,388.5 L374.4,390.1 L375.9,388.5 L375.9,388.5 L377.4,390.8 L378.9,388.5 L384.9,388.5 L386.4,386.5 L387.9,388.5 L388.9,388.5 L390.4,387.5 L391.9,388.5 L396.5,388.5 L397.5,324.5 L401.0,324.5 L402.5,322.8 L404.0,324.5 L405.0,324.5 L406.5,327.0 L408.0,324.5 L410.0,324.5 L411.5,326.2 L413.0,324.5 L412.0,324.5 L413.5,325.7 L415.0,324.5 L415.0,324.5 L416.5,322.4 L418.0,324.5 L418.0,324.5 L419.5,323.1 L421.0,324.5 L420.0,324.5 L421.5,327.1 L423.0,324.5 L427.0,324.5 L428.5,325.4 L430.0,324.5 L434.0,324.5 L435.5,325.3 L437.0,324.5 L437.0,324.5 L438.5,325.7 L440.0,324.5 L445.0,324.5 L446.5,323.8 L448.0,324.5 L451.0,324.5 L452.5,325.9 L454.0,324.5 L453.0,324.5 L454.5,323.1 L456.0,324.5 L456.0,324.5 L457.5,326.7 L459.0,324.5 L459.0,324.5 L460.5,323.5 L462.0,324.5 L467.0,324.5 L468.5,322.6 L470.0,324.5 L472.0,324.5 L473.5,326.5 L475.0,324.5 L475.0,324.5 L476.5,325.5 L478.0,324.5 L478.0,324.5 L479.5,327.1 L481.0,324.5 L481.0,324.5 L482.5,326.2 L484.0,324.5 L483.0,324.5 L484.5,326.9 L486.0,324.5 L487.0,324.5 L488.5,326.2 L490.0,324.5 L491.0,324.5 L492.5,326.0 L494.0,324.5 L496.0,324.5 L497.5,325.5 L499.0,324.5 L499.0,324.5 L500.5,323.3 L502.0,324.5 L507.0,324.5 L508.5,323.5 L510.0,324.5 L510.0,324.5 L511.5,323.3 L513.0,324.5 L513.0,324.5 L514.5,326.7 L516.0,324.5 L516.0,324.5 L517.5,326.6 L519.0,324.5 L523.7,324.5 L524.7,388.5 L530.2,388.5 L531.7,387.7 L533.2,388.5 L534.2,388.5 L535.7,386.7 L537.2,388.5 L547.2,388.5 L548.7,390.3 L550.2,388.5 L551.2,388.5 L552.7,391.0 L554.2,388.5 L556.2,388.5 L557.7,390.8 L559.2,388.5 L565.2,388.5 L566.7,390.6 L568.2,388.5 L567.2,388.5 L568.7,390.1 L570.2,388.5 L571.2,388.5 L572.7,390.1 L574.2,388.5 L574.2,388.5 L575.7,390.9 L577.2,388.5 L580.2,388.5 L581.7,387.6 L583.2,388.5 L584.2,388.5 L585.7,390.0 L587.2,388.5 L587.2,388.5 L588.7,387.3 L590.2,388.5 L589.2,388.5 L590.7,389.3 L592.2,388.5 L593.2,388.5 L594.7,386.6 L596.2,388.5 L599.2,388.5 L600.7,391.0 L602.2,388.5 L603.2,388.5 L604.7,390.3 L606.2,388.5 L605.2,388.5 L606.7,390.7 L608.2,388.5 L608.2,388.5 L609.7,389.5 L611.2,388.5 L620.2,388.5 L621.7,387.3 L623.2,388.5 L622.2,388.5 L623.7,390.6 L625.2,388.5 L626.2,388.5 L627.7,387.7 L629.2,388.5 L636.2,388.5 L637.7,387.5 L639.2,388.5 L650.9,388.5 L651.9,324.5 L652.4,324.5 L653.9,326.7 L655.4,324.5 L656.4,324.5 L657.9,326.6 L659.4,324.5 L659.4,324.5 L660.9,323.8 L662.4,324.5 L661.4,324.5 L662.9,325.7 L664.4,324.5 L668.4,324.5 L669.9,326.4 L671.4,324.5 L673.4,324.5 L674.9,322.5 L676.4,324.5 L675.4,324.5 L676.9,323.3 L678.4,324.5 L678.4,324.5 L679.9,323.3 L681.4,324.5 L681.4,324.5 L682.9,326.7 L684.4,324.5 L683.4,324.5 L684.9,326.1 L686.4,324.5 L688.4,324.5 L689.9,326.6 L691.4,324.5 L697.4,324.5 L698.9,326.3 L700.4,324.5 L704.4,324.5 L705.9,325.9 L707.4,324.5 L708.4,324.5 L709.9,326.0 L711.4,324.5 L710.4,324.5 L711.9,326.9 L713.4,324.5 L714.4,324.5 L715.9,326.8 L717.4,324.5 L716.4,324.5 L717.9,326.0 L719.4,324.5 L725.4,324.5 L726.9,323.9 L728.4,324.5 L730.4,324.5 L731.9,322.5 L733.4,324.5 L737.4,324.5 L738.9,322.5 L740.4,324.5 L740.4,324.5 L741.9,325.6 L743.4,324.5 L744.4,324.5 L745.9,322.9 L747.4,324.5 L752.4,324.5 L753.9,323.6 L755.4,324.5 L755.4,324.5 L756.9,326.3 L758.4,324.5 L758.4,324.5 L759.9,325.9 L761.4,324.5 L761.4,324.5 L762.9,322.9 L764.4,324.5 L765.4,324.5 L766.9,323.2 L768.4,324.5 L768.4,324.5 L769.9,325.5 L771.4,324.5 L771.4,324.5 L772.9,327.0 L774.4,324.5 L778.1,324.5 L779.1,388.5 L779.6,388.5 L781.1,390.7 L782.6,388.5 L783.6,388.5 L785.1,390.1 L786.6,388.5 L787.6,388.5 L789.1,389.6 L790.6,388.5 L795.6,388.5 L797.1,389.8 L798.6,388.5 L799.6,388.5 L801.1,389.5 L802.6,388.5 L802.6,388.5 L804.1,389.7 L805.6,388.5 L817.6,388.5 L819.1,390.9 L820.6,388.5 L822.6,388.5 L824.1,386.8 L825.6,388.5 L825.6,388.5 L827.1,390.9 L828.6,388.5 L832.6,388.5 L834.1,387.8 L835.6,388.5 L836.6,388.5 L838.1,389.7 L839.6,388.5 L840.6,388.5 L842.1,390.9 L843.6,388.5 L842.6,388.5 L844.1,389.5 L845.6,388.5 L845.6,388.5 L847.1,389.5 L848.6,388.5 L848.6,388.5 L850.1,387.6 L851.6,388.5 L851.6,388.5 L853.1,390.5 L854.6,388.5 L855.6,388.5 L857.1,387.3 L858.6,388.5 L859.6,388.5 L861.1,390.3 L862.6,388.5 L862.6,388.5 L864.1,390.7 L865.6,388.5 L866.6,388.5 L868.1,387.8 L869.6,388.5 L871.6,388.5 L873.1,390.8 L874.6,388.5 L876.6,388.5 L878.1,386.6 L879.6,388.5 L896.6,388.5 L898.1,390.8 L899.6,388.5 L900.6,388.5 L902.1,386.9 L903.6,388.5 L905.2,388.5 L906.2,324.5 L906.7,324.5 L908.2,323.8 L909.7,324.5 L909.7,324.5 L911.2,323.3 L912.7,324.5 L915.7,324.5 L917.2,323.5 L918.7,324.5 L918.7,324.5 L920.2,325.8 L921.7,324.5 L926.7,324.5 L928.2,325.5 L929.7,324.5 L942.7,324.5 L944.2,326.2 L945.7,324.5 L945.7,324.5 L947.2,323.2 L948.7,324.5 L950.7,324.5 L952.2,325.8 L953.7,324.5 L957.7,324.5 L959.2,326.0 L960.7,324.5 L968.7,324.5 L970.2,326.7 L971.7,324.5 L970.7,324.5 L972.2,326.3 L973.7,324.5 L976.7,324.5 L978.2,323.5 L979.7,324.5 L979.7,324.5 L981.2,326.9 L982.7,324.5 L985.7,324.5 L987.2,322.6 L988.7,324.5 L989.7,324.5 L991.2,326.2 L992.7,324.5 L995.7,324.5 L997.2,323.3 L998.7,324.5 L1001.7,324.5 L1003.2,327.0 L1004.7,324.5 L1003.7,324.5 L1005.2,325.7 L1006.7,324.5 L1015.7,324.5 L1017.2,326.4 L1018.7,324.5 L1018.7,324.5 L1020.2,326.5 L1021.7,324.5 L1023.7,324.5 L1025.2,322.6 L1026.7,324.5 L1031,324.5" fill="none" stroke="#a47686" stroke-width="1"/>
<path d="M18,489.5 L18.5,489.5 L20.0,491.4 L21.5,489.5 L21.5,489.5 L23.0,490.7 L24.5,489.5 L26.5,489.5 L28.0,487.7 L29.5,489.5 L32.5,489.5 L34.0,491.7 L35.5,489.5 L35.5,489.5 L37.0,490.7 L38.5,489.5 L38.5,489.5 L40.0,491.4 L41.5,489.5 L41.5,489.5 L43.0,491.3 L44.5,489.5 L43.5,489.5 L45.0,488.9 L46.5,489.5 L46.5,489.5 L48.0,491.9 L49.5,489.5 L50.5,489.5 L52.0,487.7 L53.5,489.5 L62.5,489.5 L64.0,488.1 L65.5,489.5 L78.5,489.5 L80.0,488.6 L81.5,489.5 L81.5,489.5 L83.0,488.8 L84.5,489.5 L83.5,489.5 L85.0,490.5 L86.5,489.5 L93.5,489.5 L95.0,491.1 L96.5,489.5 L96.5,489.5 L98.0,488.3 L99.5,489.5 L100.5,489.5 L102.0,488.3 L103.5,489.5 L102.5,489.5 L104.0,490.9 L105.5,489.5 L109.5,489.5 L111.0,490.5 L112.5,489.5 L112.5,489.5 L114.0,488.9 L115.5,489.5 L119.5,489.5 L121.0,491.4 L122.5,489.5 L125.5,489.5 L127.0,491.1 L128.5,489.5 L132.5,489.5 L134.0,490.4 L135.5,489.5 L135.5,489.5 L137.0,490.3 L138.5,489.5 L138.5,489.5 L140.0,487.8 L141.5,489.5 L142.2,489.5 L143.2,425.5 L143.7,425.5 L145.2,427.8 L146.7,425.5 L146.7,425.5 L148.2,426.7 L149.7,425.5 L149.7,425.5 L151.2,426.6 L152.7,425.5 L152.7,425.5 L154.2,427.5 L155.7,425.5 L155.7,425.5 L157.2,427.8 L158.7,425.5 L158.7,425.5 L160.2,423.8 L161.7,425.5 L161.7,425.5 L163.2,424.6 L164.7,425.5 L165.7,425.5 L167.2,423.9 L168.7,425.5 L168.7,425.5 L170.2,423.6 L171.7,425.5 L170.7,425.5 L172.2,427.8 L173.7,425.5 L176.7,425.5 L178.2,426.5 L179.7,425.5 L179.7,425.5 L181.2,427.8 L182.7,425.5 L182.7,425.5 L184.2,427.0 L185.7,425.5 L186.7,425.5 L188.2,426.5 L189.7,425.5 L189.7,425.5 L191.2,424.3 L192.7,425.5 L193.7,425.5 L195.2,426.5 L196.7,425.5 L196.7,425.5 L198.2,427.4 L199.7,425.5 L219.7,425.5 L221.2,424.5 L222.7,425.5 L223.7,425.5 L225.2,426.4 L226.7,425.5 L226.7,425.5 L228.2,427.4 L229.7,425.5 L230.7,425.5 L232.2,423.6 L233.7,425.5 L234.7,425.5 L236.2,427.6 L237.7,425.5 L237.7,425.5 L239.2,427.9 L240.7,425.5 L240.7,425.5 L242.2,427.0 L243.7,425.5 L246.7,425.5 L248.2,427.9 L249.7,425.5 L249.7,425.5 L251.2,427.2 L252.7,425.5 L251.7,425.5 L253.2,423.8 L254.7,425.5 L258.7,425.5 L260.2,426.8 L261.7,425.5 L261.7,425.5 L263.2,426.5 L264.7,425.5 L269.4,425.5 L270.4,489.5 L270.9,489.5 L272.4,487.7 L273.9,489.5 L277.9,489.5 L279.4,487.9 L280.9,489.5 L281.9,489.5 L283.4,491.5 L284.9,489.5 L287.9,489.5 L289.4,491.4 L290.9,489.5 L290.9,489.5 L292.4,491.1 L293.9,489.5 L294.9,489.5 L296.4,491.7 L297.9,489.5 L296.9,489.5 L298.4,490.4 L299.9,489.5 L298.9,489.5 L300.4,491.4 L301.9,489.5 L304.9,489.5 L306.4,487.7 L307.9,489.5 L316.9,489.5 L318.4,491.4 L319.9,489.5 L320.9,489.5 L322.4,490.9 L323.9,489.5 L326.9,489.5 L328.4,491.2 L329.9,489.5 L329.9,489.5 L331.4,491.3 L332.9,489.5 L333.9,489.5 L335.4,491.7 L336.9,489.5 L336.9,489.5 L338.4,488.5 L339.9,489.5 L338.9,489.5 L340.4,491.1 L341.9,489.5 L341.9,489.5 L343.4,488.1 L344.9,489.5 L349.9,489.5 L351.4,491.6 L352.9,489.5 L351.9,489.5 L353.4,491.5 L354.9,489.5 L364.9,489.5 L366.4,488.1 L367.9,489.5 L367.9,489.5 L369.4,490.7 L370.9,489.5 L370.9,489.5 L372.4,491.1 L373.9,489.5 L374.9,489.5 L376.4,490.4 L377.9,489.5 L377.9,489.5 L379.4,490.6 L380.9,489.5 L380.9,489.5 L382.4,491.7 L383.9,489.5 L386.9,489.5 L388.4,488.8 L389.9,489.5 L388.9,489.5 L390.4,487.9 L391.9,489.5 L396.5,489.5 L397.5,425.5 L400.0,425.5 L401.5,427.2 L403.0,425.5 L404.0,425.5 L405.5,426.4 L407.0,425.5 L412.0,425.5 L413.5,424.7 L415.0,425.5 L419.0,425.5 L420.5,427.7 L422.0,425.5 L421.0,425.5 L422.5,427.2 L424.0,425.5 L424.0,425.5 L425.5,426.4 L427.0,425.5 L427.0,425.5 L428.5,427.1 L430.0,425.5 L430.0,425.5 L431.5,427.1 L433.0,425.5 L434.0,425.5 L435.5,424.5 L437.0,425.5 L436.0,425.5 L437.5,424.6 L439.0,425.5 L438.0,425.5 L439.5,427.4 L441.0,425.5 L444.0,425.5 L445.5,427.5 L447.0,425.5 L446.0,425.5 L447.5,424.4 L449.0,425.5 L449.0,425.5 L450.5,423.6 L452.0,425.5 L453.0,425.5 L454.5,427.8 L456.0,425.5 L457.0,425.5 L458.5,426.7 L460.0,425.5 L460.0,425.5 L461.5,427.4 L463.0,425.5 L462.0,425.5 L463.5,427.1 L465.0,425.5 L464.0,425.5 L465.5,426.6 L467.0,425.5 L467.0,425.5 L468.5,426.7 L470.0,425.5 L482.0,425.5 L483.5,426.8 L485.0,425.5 L485.0,425.5 L486.5,427.6 L488.0,425.5 L488.0,425.5 L489.5,427.7 L491.0,425.5 L503.0,425.5 L504.5,427.7 L506.0,425.5 L507.0,425.5 L508.5,427.5 L510.0,425.5 L512.0,425.5 L513.5,423.7 L515.0,425.5 L520.0,425.5 L521.5,424.2 L523.0,425.5 L523.7,425.5 L524.7,489.5 L525.2,489.5 L526.7,491.2 L528.2,489.5 L531.2,489.5 L532.7,491.8 L534.2,489.5 L535.2,489.5 L536.7,491.1 L538.2,489.5 L541.2,489.5 L542.7,488.6 L544.2,489.5 L543.2,489.5 L544.7,491.1 L546.2,489.5 L551.2,489.5 L552.7,487.6 L554.2,489.5 L558.2,489.5 L559.7,490.9 L561.2,489.5 L565.2,489.5 L566.7,490.9 L568.2,489.5 L567.2,489.5 L568.7,491.9 L570.2,489.5 L569.2,489.5 L570.7,487.9 L572.2,489.5 L575.2,489.5 L576.7,488.9 L578.2,489.5 L578.2,489.5 L579.7,487.7 L581.2,489.5 L581.2,489.5 L582.7,487.8 L584.2,489.5 L584.2,489.5 L585.7,490.6 L587.2,489.5 L589.2,489.5 L590.7,490.4 L592.2,489.5 L594.2,489.5 L595.7,490.4 L597.2,489.5 L601.2,489.5 L602.7,487.7 L604.2,489.5 L604.2,489.5 L605.7,491.3 L607.2,489.5 L613.2,489.5 L614.7,491.2 L616.2,489.5 L617.2,489.5 L618.7,490.5 L620.2,489.5 L621.2,489.5 L622.7,491.3 L624.2,489.5 L624.2,489.5 L625.7,490.8 L627.2,489.5 L626.2,489.5 L627.7,488.6 L629.2,489.5 L633.2,489.5 L634.7,490.8 L636.2,489.5 L639.2,489.5 L640.7,487.7 L642.2,489.5 L642.2,489.5 L643.7,487.9 L645.2,489.5 L646.2,489.5 L647.7,491.9 L649.2,489.5 L650.9,489.5 L651.9,425.5 L652.4,425.5 L653.9,427.4 L655.4,425.5 L655.4,425.5 L656.9,424.7 L658.4,425.5 L659.4,425.5 L660.9,427.8 L662.4,425.5 L662.4,425.5 L663.9,424.2 L665.4,425.5 L664.4,425.5 L665.9,426.4 L667.4,425.5 L667.4,425.5 L668.9,426.3 L670.4,425.5 L669.4,425.5 L670.9,427.1 L672.4,425.5 L677.4,425.5 L678.9,423.9 L680.4,425.5 L680.4,425.5 L681.9,426.6 L683.4,425.5 L694.4,425.5 L695.9,427.7 L697.4,425.5 L702.4,425.5 L703.9,427.1 L705.4,425.5 L710.4,425.5 L711.9,427.0 L713.4,425.5 L719.4,425.5 L720.9,424.7 L722.4,425.5 L723.4,425.5 L724.9,427.8 L726.4,425.5 L725.4,425.5 L726.9,427.5 L728.4,425.5 L733.4,425.5 L734.9,424.3 L736.4,425.5 L735.4,425.5 L736.9,426.8 L738.4,425.5 L740.4,425.5 L741.9,427.8 L743.4,425.5 L743.4,425.5 L744.9,427.1 L746.4,425.5 L745.4,425.5 L746.9,423.6 L748.4,425.5 L748.4,425.5 L749.9,427.3 L751.4,425.5 L752.4,425.5 L753.9,426.8 L755.4,425.5 L755.4,425.5 L756.9,426.7 L758.4,425.5 L768.4,425.5 L769.9,424.4 L771.4,425.5 L778.1,425.5 L779.1,489.5 L779.6,489.5 L781.1,488.8 L782.6,489.5 L786.6,489.5 L788.1,487.7 L789.6,489.5 L795.6,489.5 L797.1,487.9 L798.6,489.5 L799.6,489.5 L801.1,490.7 L802.6,489.5 L803.6,489.5 L805.1,491.5 L806.6,489.5 L806.6,489.5 L808.1,487.9 L809.6,489.5 L810.6,489.5 L812.1,491.8 L813.6,489.5 L815.6,489.5 L817.1,490.5 L818.6,489.5 L818.6,489.5 L820.1,491.5 L821.6,489.5 L821.6,489.5 L823.1,487.8 L824.6,489.5 L823.6,489.5 L825.1,487.6 L826.6,489.5 L825.6,489.5 L827.1,488.3 L828.6,489.5 L828.6,489.5 L830.1,488.0 L831.6,489.5 L831.6,489.5 L833.1,491.7 L834.6,489.5 L842.6,489.5 L844.1,488.7 L845.6,489.5 L844.6,489.5 L846.1,488.7 L847.6,489.5 L847.6,489.5 L849.1,491.5 L850.6,489.5 L850.6,489.5 L852.1,490.9 L853.6,489.5 L854.6,489.5 L856.1,491.1 L857.6,489.5 L857.6,489.5 L859.1,488.5 L860.6,489.5 L860.6,489.5 L862.1,491.1 L863.6,489.5 L862.6,489.5 L864.1,491.0 L865.6,489.5 L865.6,489.5 L867.1,490.3 L868.6,489.5 L883.6,489.5 L885.1,490.4 L886.6,489.5 L892.6,489.5 L894.1,490.8 L895.6,489.5 L896.6,489.5 L898.1,491.8 L899.6,489.5 L905.2,489.5 L906.2,425.5 L906.7,425.5 L908.2,426.9 L909.7,425.5 L908.7,425.5 L910.2,424.9 L911.7,425.5 L919.7,425.5 L921.2,426.5 L922.7,425.5 L922.7,425.5 L924.2,424.5 L925.7,425.5 L927.7,425.5 L929.2,427.0 L930.7,425.5 L931.7,425.5 L933.2,424.3 L934.7,425.5 L934.7,425.5 L936.2,423.9 L937.7,425.5 L946.7,425.5 L948.2,426.3 L949.7,425.5 L954.7,425.5 L956.2,426.5 L957.7,425.5 L963.7,425.5 L965.2,426.5 L966.7,425.5 L967.7,425.5 L969.2,427.8 L970.7,425.5 L969.7,425.5 L971.2,427.7 L972.7,425.5 L972.7,425.5 L974.2,426.7 L975.7,425.5 L977.7,425.5 L979.2,426.6 L980.7,425.5 L980.7,425.5 L982.2,427.2 L983.7,425.5 L984.7,425.5 L986.2,426.6 L987.7,425.5 L989.7,425.5 L991.2,427.6 L992.7,425.5 L997.7,425.5 L999.2,424.9 L1000.7,425.5 L1002.7,425.5 L1004.2,423.8 L1005.7,425.5 L1005.7,425.5 L1007.2,427.9 L1008.7,425.5 L1007.7,425.5 L1009.2,424.2 L1010.7,425.5 L1009.7,425.5 L1011.2,423.9 L1012.7,425.5 L1012.7,425.5 L1014.2,426.6 L1015.7,425.5 L1014.7,425.5 L1016.2,427.5 L1017.7,425.5 L1017.7,425.5 L1019.2,426.8 L1020.7,425.5 L1022.7,425.5 L1024.2,427.3 L1025.7,425.5 L1031,425.5" fill="none" stroke="#2b9a33" stroke-width="1"/>
<path d="M142,82V581M270,83V582" stroke="#7c7e48" stroke-width="2"/>
</svg>
<div class="a sl" style="left:8px;top:68px;color:#e6e6e6;font-size:8.8px;transform:scaleX(0.83)">USB0::0x0699::0x0408::C041762::INSTR</div>
<div class="a sl" style="left:209px;top:70px;color:#22a24a">H:400.0us</div>
<div class="a sl" style="left:269px;top:70px;color:#d4d444">C1:2.0v</div>
<div class="a sl" style="left:418px;top:70px;color:#3c86d0">C2:2.0v</div>
<div class="a sl" style="left:561px;top:70px;color:#b468c8">C3:2.0v</div>
<div class="a sl" style="left:714px;top:70px;color:#22a25a">C4:2.0v</div>
<div class="a" style="left:997.5px;top:69px;font-size:10px;letter-spacing:0.2px;line-height:11px;color:#e01818">已停止</div>
<div class="a sl" style="left:6px;top:117px;color:#b8b848">y1</div>
<div class="a sl" style="left:6px;top:181px;color:#b8b848">y2</div>
<div class="a sl" style="left:141px;top:582px;color:#b8b848;font-size:7px">x1</div>
<div class="a sl" style="left:272px;top:582px;color:#b8b848;font-size:7px">x2</div>
<div class="a sl" style="left:14px;top:595px;color:#d8d840">X1:490.6us</div>
<div class="a sl" style="left:76px;top:595px;color:#d8d840">X2:997.7us</div>
<div class="a sl" style="left:153px;top:595px;color:#d8d840">Y1:8.50v</div>
<div class="a sl" style="left:216px;top:595px;color:#d8d840">Y2:5.99V</div>
<div class="a sl" style="left:282px;top:596px;color:#d8d840"><span style="font-size:5px">△</span>X:507.1us</div>
<div class="a sl" style="left:340px;top:597px;color:#d8d840"><span style="font-size:5px">△</span>Y:2.5v</div>
<!-- measurement panel -->
<div class="a" style="left:1098px;top:65px;font-size:9px;letter-spacing:-0.5px;line-height:9px;color:#222;font-weight:bold">测量值</div>
<div class="a" style="left:0;top:0;width:1192px;height:614px;overflow:hidden"><div class="a mrow" style="top:79.10px"><div class="ml"><span>CH1:最大值</span></div><div class="mv"><span>2.640 V</span></div></div>
<div class="a mrow" style="top:99.78px"><div class="ml"><span>CH1:最小值</span></div><div class="mv"><span>-160.00 mV</span></div></div>
<div class="a mrow" style="top:120.46px"><div class="ml"><span>CH1:平均值</span></div><div class="mv"><span>1.257 V</span></div></div>
<div class="a mrow" style="top:141.14px"><div class="ml"><span>CH1:幅值</span></div><div class="mv"><span>2.480 V</span></div></div>
<div class="a mrow" style="top:161.82px"><div class="ml"><span>CH1:频率</span></div><div class="mv"><span>995.8 HZ</span></div></div>
<div class="a mrow" style="top:182.50px"><div class="ml"><span>CH1:有效值</span></div><div class="mv"><span>1.764 V</span></div></div>
<div class="a mrow" style="top:203.18px"><div class="ml"><span>CH1:峰峰值</span></div><div class="mv"><span>2.800 V</span></div></div>
<div class="a mrow" style="top:223.86px"><div class="ml"><span>CH2:最大值</span></div><div class="mv"><span>2.680 V</span></div></div>
<div class="a mrow" style="top:244.54px"><div class="ml"><span>CH2:最小值</span></div><div class="mv"><span>-40.00 mV</span></div></div>
<div class="a mrow" style="top:265.22px"><div class="ml"><span>CH2:平均值</span></div><div class="mv"><span>1.283 V</span></div></div>
<div class="a mrow" style="top:285.90px"><div class="ml"><span>CH2:幅值</span></div><div class="mv"><span>2.480 V</span></div></div>
<div class="a mrow" style="top:306.58px"><div class="ml"><span>CH2:频率</span></div><div class="mv"><span>996.0 HZ</span></div></div>
<div class="a mrow" style="top:327.26px"><div class="ml"><span>CH2:有效值</span></div><div class="mv"><span>1.772 V</span></div></div>
<div class="a mrow" style="top:347.94px"><div class="ml"><span>CH2:峰峰值</span></div><div class="mv"><span>2.720 V</span></div></div>
<div class="a mrow" style="top:368.62px"><div class="ml"><span>CH3:最大值</span></div><div class="mv"><span>2.560 V</span></div></div>
<div class="a mrow" style="top:389.30px"><div class="ml"><span>CH3:最小值</span></div><div class="mv"><span>-80.00 mV</span></div></div>
<div class="a mrow" style="top:409.98px"><div class="ml"><span>CH3:平均值</span></div><div class="mv"><span>1.247 V</span></div></div>
<div class="a mrow" style="top:430.66px"><div class="ml"><span>CH3:幅值</span></div><div class="mv"><span>2.480 V</span></div></div>
<div class="a mrow" style="top:451.34px"><div class="ml"><span>CH3:频率</span></div><div class="mv"><span>995.9 HZ</span></div></div>
<div class="a mrow" style="top:472.02px"><div class="ml"><span>CH3:有效值</span></div><div class="mv"><span>1.756 V</span></div></div>
<div class="a mrow" style="top:492.70px"><div class="ml"><span>CH3:峰峰值</span></div><div class="mv"><span>2.640 V</span></div></div>
<div class="a mrow" style="top:513.38px"><div class="ml"><span>CH4:最大值</span></div><div class="mv"><span>2.640 V</span></div></div>
<div class="a mrow" style="top:534.06px"><div class="ml"><span>CH4:最小值</span></div><div class="mv"><span>-80.00 mV</span></div></div>
<div class="a mrow" style="top:554.74px"><div class="ml"><span>CH4:平均值</span></div><div class="mv"><span>1.267 V</span></div></div>
<div class="a mrow" style="top:575.42px"><div class="ml"><span>CH4:幅值</span></div><div class="mv"><span>2.480 V</span></div></div>
<div class="a mrow" style="top:596.10px"><div class="ml"><span>CH4:频率</span></div><div class="mv"><span>995.9 HZ</span></div></div></div>
<div class="a" style="left:1172px;top:76px;width:7px;height:538px;background:#f0f0f0"></div>
<div class="a" style="left:1172px;top:83px;width:7px;height:488px;background:#c8c8c8"></div>
<svg class="a" style="left:1173px;top:77px" width="5" height="4" viewBox="0 0 5 4"><path d="M0.5 3 L2.5 1 L4.5 3" fill="none" stroke="#666" stroke-width="0.9"/></svg>
<svg class="a" style="left:1173px;top:609px" width="5" height="4" viewBox="0 0 5 4"><path d="M0.5 1 L2.5 3 L4.5 1" fill="none" stroke="#666" stroke-width="0.9"/></svg>
<div class="a" style="left:1191px;top:25px;width:1px;height:627px;background:#8a8a8a"></div>
<div class="a" style="left:1190px;top:0;width:2px;height:25px;background:#234f88"></div>
<!-- bottom -->
<div class="a" style="left:25.5px;top:610px;width:22px;height:22px;border-radius:50%;background:#2fb24a"></div>
<svg class="a" style="left:32px;top:615px" width="12" height="14" viewBox="0 0 12 14"><path d="M2.3 2.2 L10.2 7 L2.3 11.8 Z" fill="#fff" stroke="#fff" stroke-width="2" stroke-linejoin="round"/></svg>
<div class="a" style="left:51px;top:617px;font-size:8px;line-height:8px;color:#2fb24a;font-weight:bold">单次触发</div>
<div class="a" style="left:153.5px;top:610px;width:22px;height:22px;border-radius:50%;background:#1f82d2"></div>
<svg class="a" style="left:156px;top:615px" width="18" height="14" viewBox="0 0 18 14"><rect x="1.3" y="2" width="1.8" height="10" fill="#fff"/><rect x="4.3" y="2" width="1.8" height="10" fill="#fff"/><path d="M9.2 2.2 L16 7 L9.2 11.8 Z" fill="#fff" stroke="#fff" stroke-width="2" stroke-linejoin="round"/></svg>
<div class="a" style="left:179px;top:617px;font-size:8px;line-height:8px;color:#1f82d2;font-weight:bold">连续触发</div>
<div class="a" style="left:696px;top:618px;font-size:10px;line-height:10px;color:#333">波形名称</div>
<div class="a" style="left:747px;top:614px;width:102px;height:19px;border:1px solid #bdbdbd;border-radius:2px;font-size:10px;line-height:17px;padding-left:5px;color:#222">123</div>
<div class="a" style="left:856px;top:618px;width:19px;height:11px;background:#e4e4e4;border-radius:6px"></div>
<div class="a" style="left:865px;top:619px;width:9px;height:9px;background:#e84242;border-radius:50%"></div>
<div class="a" style="left:877px;top:619px;font-size:9px;line-height:9px;color:#333">关闭余屏</div>
<div class="a" style="left:937px;top:610px;width:53px;height:22px;background:#8dbbe9;border-radius:3px"></div>
<div class="a" style="left:946px;top:611px;width:33px;height:20px;background:#fff"></div>
<svg class="a" style="left:939px;top:617px" width="6" height="9" viewBox="0 0 6 9"><path d="M4.5 0.8 L1.3 4.5 L4.5 8.2" fill="none" stroke="#f2f7fd" stroke-width="1"/></svg>
<svg class="a" style="left:981px;top:617px" width="6" height="9" viewBox="0 0 6 9"><path d="M1.5 0.8 L4.7 4.5 L1.5 8.2" fill="none" stroke="#f2f7fd" stroke-width="1"/></svg>
<div class="a" style="left:958.5px;top:612.5px;font-size:8.5px;line-height:9px;color:#3040b8">1</div>
<div class="a" style="left:953.5px;top:622.5px;font-size:6.8px;line-height:7px;color:#222">共1&nbsp;&nbsp;&nbsp;个</div>
<svg class="a" style="left:1008px;top:610px" width="20" height="22" viewBox="0 0 20 22"><path d="M1.8 0.1 H15 L19 4.5 V20.7 Q19 21.7 18 21.7 H1.8 Q0.8 21.7 0.8 20.7 V1.1 Q0.8 0.1 1.8 0.1 Z" fill="#8e939b"/><rect x="2.9" y="3.6" width="11" height="6" fill="#fff"/><rect x="11.8" y="5" width="1.4" height="3" fill="#8e939b"/><rect x="3.6" y="12.8" width="12.6" height="2.1" fill="#fff"/><rect x="3.6" y="17.1" width="12.6" height="1.9" fill="#fff"/></svg>
<div class="a" style="left:0;top:651px;width:1192px;height:1px;background:#8a8a8a"></div>
</body></html>
